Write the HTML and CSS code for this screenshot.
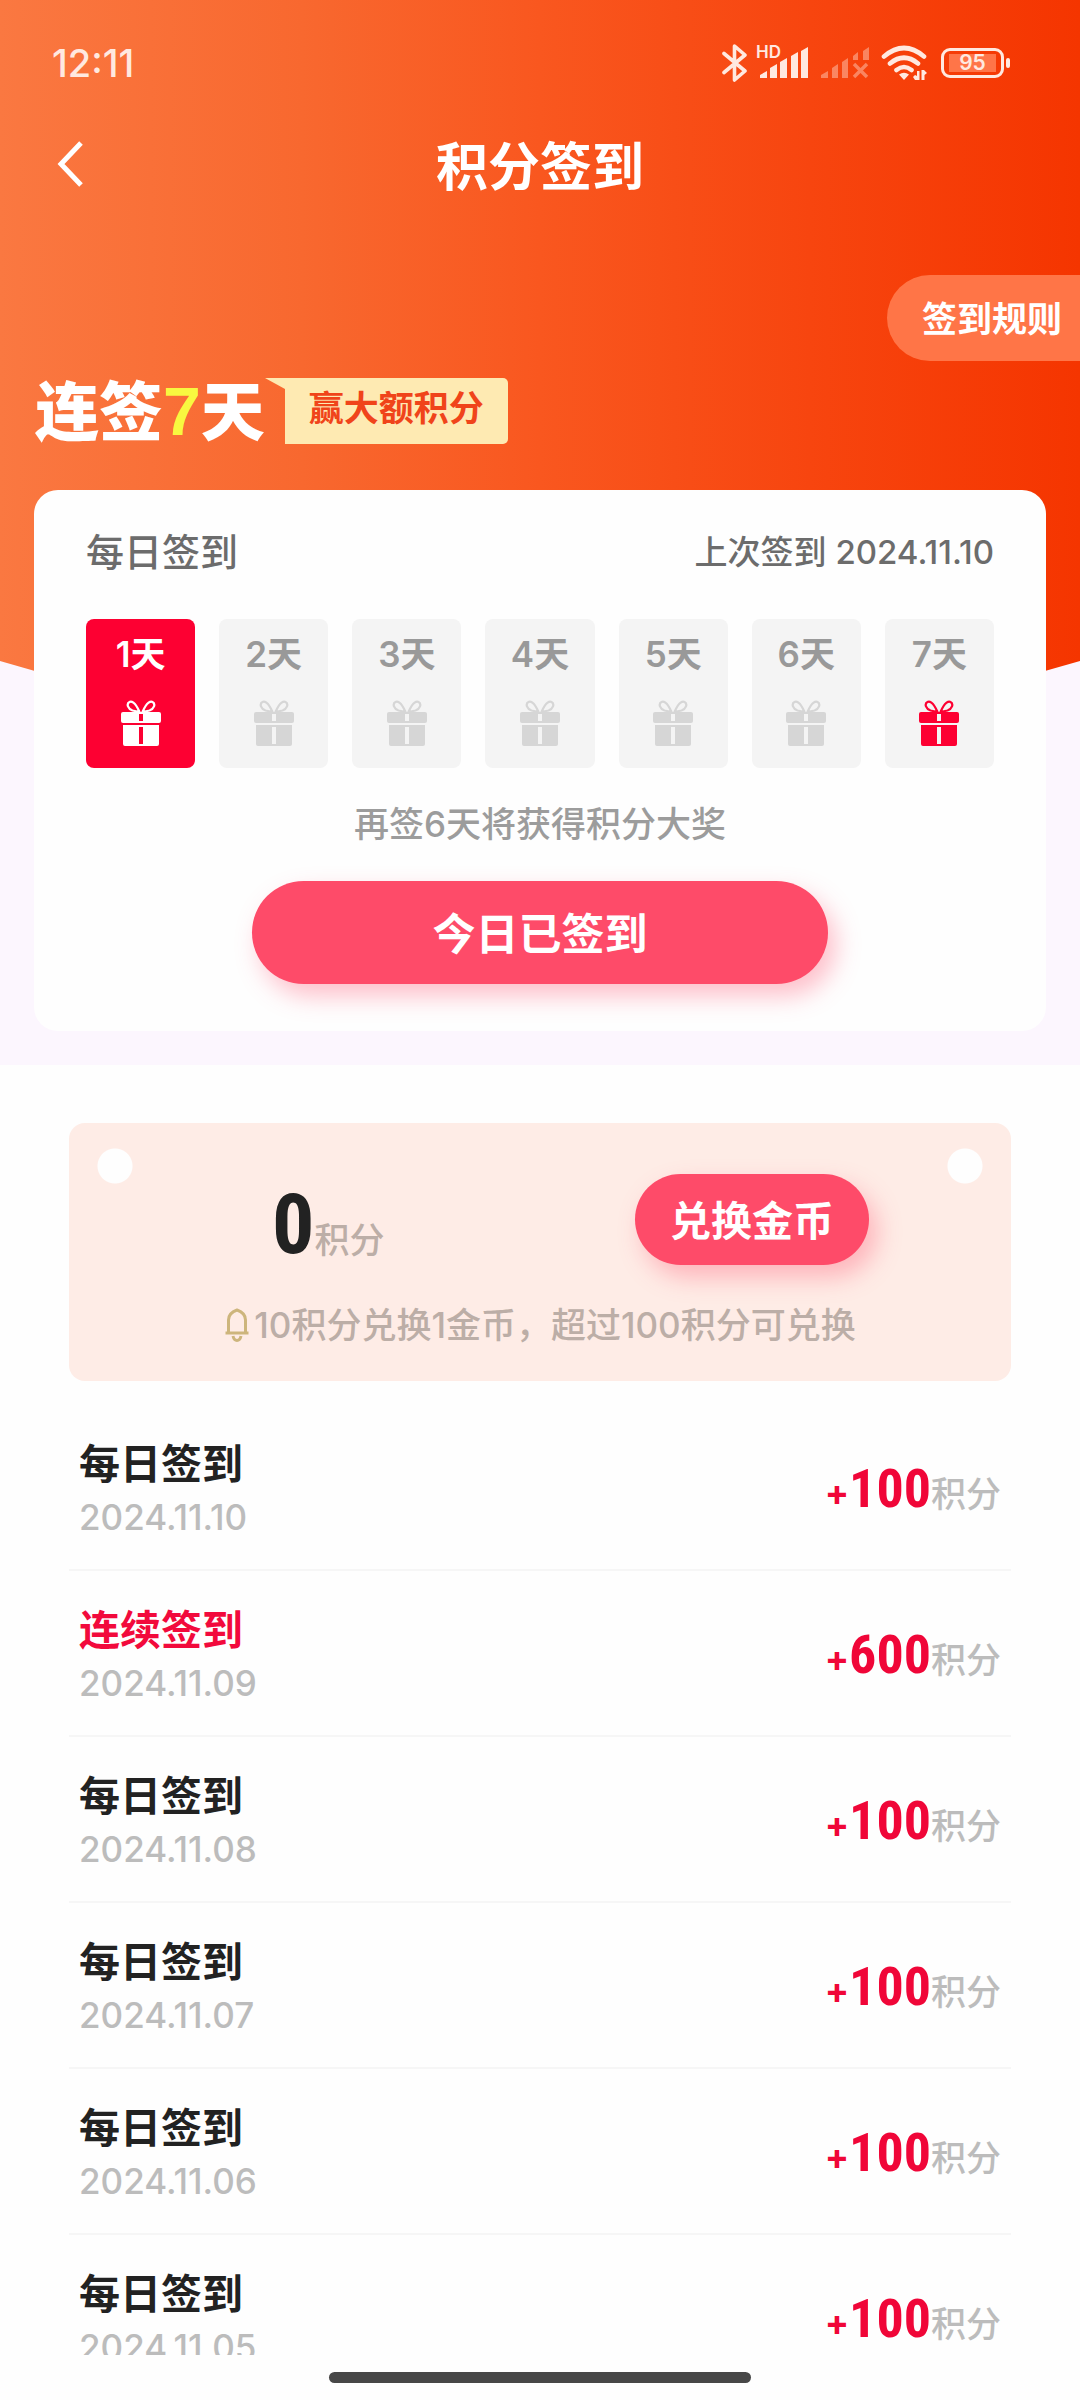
FILE: index.html
```html
<!DOCTYPE html>
<html lang="zh-CN">
<head>
<meta charset="utf-8">
<meta name="viewport" content="width=device-width, initial-scale=1">
<title>积分签到</title>
<link rel="stylesheet" href="styles.css">
</head>
<body>
<svg class="defs" aria-hidden="true">
  <symbol id="gift" viewBox="0 0 40 46">
    <path d="M18.500 12C14 1.500 10 1 8.500 2 5 4 7 9 11.500 10.500ZM21.500 12C26 1.500 30 1 31.500 2 35 4 33 9 28.500 10.500Z" fill="none" stroke="currentColor" stroke-width="2.200" stroke-linejoin="round"/>
    <path fill="currentColor" fill-rule="evenodd" d="M2 12H38Q40 12 40 14V21Q40 23 38 23H2Q0 23 0 21V14Q0 12 2 12ZM18 14V21H22V14ZM2 25H38V44Q38 46 36 46H4Q2 46 2 44ZM18 27V44H22V27Z"/>
  </symbol>
</svg>
<div class="app">
  <section class="hero">
    <div class="status">
      <time class="clock">12:11</time>
      <div class="indicators">
        <svg width="26" height="40" viewBox="0 0 26 40" aria-label="蓝牙"><path d="M2 10.500 23 28 12.500 37V3L23 12 2 29.500" fill="none" stroke="currentColor" stroke-width="3.600" stroke-linejoin="round" stroke-linecap="round"/></svg>
        <div class="cell">
          <span class="hd">HD</span>
          <svg width="50" height="32" viewBox="0 0 50 32" fill="currentColor" aria-label="信号"><path d="M1 31V28L8 24V31ZM11 31V21L18 17V31ZM21 31V15L28 11V31ZM32 31V9L39 5V31ZM42 31V4L49 0V31Z"/></svg>
        </div>
        <svg class="faded" width="50" height="32" viewBox="0 0 50 32" fill="currentColor" aria-label="无信号"><path d="M1 31V28L8 24V31ZM12 31V21L18 17V31ZM22 31V15L28 11V31ZM33 13V9L38 5V13ZM43 13V4L49 0V13Z"/><path d="M34 17 47 30M47 17 34 30" stroke="currentColor" stroke-width="3.500"/></svg>
        <svg class="wifi" width="48" height="36" viewBox="0 0 48 36" aria-label="无线网络"><path d="M3 11.500Q23 -5.500 43 11.500M9 18.500Q23 7 37 18.500M15.500 25Q23 19 30.500 25" fill="none" stroke="currentColor" stroke-width="4.600" stroke-linecap="round"/><path fill="currentColor" d="M18 29.500Q23 26 28 29.500L23 35ZM34 35 32 32 34 30 36 31V26H38.500V35ZM40.500 25H43L46 28 43.500 30V35H40.500Z"/></svg>
        <div class="battery"><span>95</span></div>
      </div>
    </div>

    <header class="nav">
      <button class="back" type="button" aria-label="返回"><svg width="28" height="46" viewBox="0 0 28 46"><path d="M25 2 5 23 25 44" fill="none" stroke="currentColor" stroke-width="5"/></svg></button>
      <h1>积分签到</h1>
    </header>

    <button class="rules" type="button">签到规则</button>

    <div class="headline">
      <h2>连签<em>7</em>天</h2>
      <span class="tag">赢大额积分</span>
    </div>

    <div class="card">
      <div class="card-head">
        <h3>每日签到</h3>
        <p>上次签到 2024.11.10</p>
      </div>
      <ol class="days">
        <li class="done"><span>1天</span><svg><use href="#gift"/></svg></li>
        <li><span>2天</span><svg><use href="#gift"/></svg></li>
        <li><span>3天</span><svg><use href="#gift"/></svg></li>
        <li><span>4天</span><svg><use href="#gift"/></svg></li>
        <li><span>5天</span><svg><use href="#gift"/></svg></li>
        <li><span>6天</span><svg><use href="#gift"/></svg></li>
        <li class="prize"><span>7天</span><svg><use href="#gift"/></svg></li>
      </ol>
      <p class="hint">再签6天将获得积分大奖</p>
      <button class="pill sign" type="button">今日已签到</button>
    </div>
  </section>

  <section class="points">
    <div class="balance">
      <p class="total"><strong>0</strong><span>积分</span></p>
      <button class="pill exchange" type="button">兑换金币</button>
    </div>
    <p class="tip"><svg width="26" height="36" viewBox="0 0 26 36"><path d="M4.500 26V13Q4.500 6 13 3 21.500 6 21.500 13V26ZM1.500 26H24.500M9 29Q10 33.500 13 33.500T17 29" fill="none" stroke="currentColor" stroke-width="3"/></svg>10积分兑换1金币，超过100积分可兑换</p>
  </section>

  <ul class="records">
    <li><div><h4>每日签到</h4><time>2024.11.10</time></div><p><b>+</b><strong>100</strong><span>积分</span></p></li>
    <li class="streak"><div><h4>连续签到</h4><time>2024.11.09</time></div><p><b>+</b><strong>600</strong><span>积分</span></p></li>
    <li><div><h4>每日签到</h4><time>2024.11.08</time></div><p><b>+</b><strong>100</strong><span>积分</span></p></li>
    <li><div><h4>每日签到</h4><time>2024.11.07</time></div><p><b>+</b><strong>100</strong><span>积分</span></p></li>
    <li><div><h4>每日签到</h4><time>2024.11.06</time></div><p><b>+</b><strong>100</strong><span>积分</span></p></li>
    <li><div><h4>每日签到</h4><time>2024.11.05</time></div><p><b>+</b><strong>100</strong><span>积分</span></p></li>
  </ul>

  <footer class="home"><i></i></footer>
</div>
</body>
</html>
```
FILE: styles.css
```css
* { box-sizing: border-box; margin: 0; padding: 0; }

body {
  font-family: Inter, "Noto Sans CJK SC", sans-serif;
  font-weight: 500;
  font-size: 35px;
  line-height: 48px;
  color: #222;
  background: #fefefe;
}

h1, h4 { font-weight: 600; }
h2, h3 { font-weight: 500; }
em, i { font-style: normal; }
ol, ul { list-style: none; }
button { border: 0; font: inherit; font-weight: 600; color: inherit; background: none; cursor: pointer; }
svg { display: block; flex: none; }
.defs { display: none; }

.app { display: flex; flex-direction: column; height: 100vh; overflow: hidden; }

/* Hero */
.hero {
  position: relative;
  flex: none;
  padding-bottom: 34px;
  background: #fcf6fe;
  color: #fff;
}
.hero::before {
  content: "";
  position: absolute;
  inset: 0 0 auto;
  height: 700px;
  background: linear-gradient(90deg, #fa7841 0%, #f8682f 28%, #f9571f 50%, #f7450f 75%, #f53500 100%);
  clip-path: polygon(0 0, 100% 0, 100% 661px, 90% 692px, 10% 692px, 0 661px);
}
.hero > * { position: relative; }

.status {
  display: flex;
  align-items: center;
  justify-content: space-between;
  height: 126px;
  padding: 0 69px 0 52px;
  color: #ffe9e0;
}
.clock { font-size: 38px; }
.indicators { display: flex; align-items: center; gap: 11px; }
.cell { position: relative; }
.hd { position: absolute; left: -3px; top: -2px; font-size: 17px; line-height: 14px; font-weight: 600; }
.faded { opacity: .4; }
.battery {
  position: relative;
  display: grid;
  place-items: center;
  width: 63px;
  height: 30px;
  margin: 0 7px 0 1px;
  border: 3px solid currentColor;
  border-radius: 9px;
  font-size: 21px;
  line-height: 18px;
  font-weight: 600;
}
.battery span { width: 47px; text-align: center; background: #ff7548; }
.battery::after {
  content: "";
  position: absolute;
  right: -9px;
  top: 7px;
  width: 4px;
  height: 10px;
  border-radius: 2px;
  background: currentColor;
}

.nav {
  display: grid;
  grid-template-columns: 100px 1fr 100px;
  align-items: center;
  height: 84px;
}
.nav h1 { font-size: 52px; line-height: 72px; text-align: center; }
.back { display: flex; padding: 0 0 8px 56px; }

.rules {
  display: block;
  height: 86px;
  margin: 65px 0 0 auto;
  padding: 2px 18px 0 35px;
  border-radius: 43px 0 0 43px;
  background: #ff7547;
}

.headline { display: flex; gap: 20px; height: 66px; margin: 17px 35px 0; }
.headline h2 { font-size: 64px; line-height: 66px; font-weight: 900; }
.headline em { font-family: "Liberation Sans", sans-serif; font-size: 68px; color: #f8f840; }
.tag {
  position: relative;
  padding: 0 24px;
  border-radius: 0 5px 5px 0;
  background: #feeab2;
  color: #f0441a;
  font-weight: 700;
  line-height: 60px;
}
.tag::before {
  content: "";
  position: absolute;
  right: 100%;
  top: 0;
  border-top: 11px solid #feeab2;
  border-left: 20px solid transparent;
}

.card {
  display: flex;
  flex-direction: column;
  margin: 46px 34px 0;
  padding: 38px 52px 47px;
  border-radius: 24px;
  background: #fefefe;
  color: #6c6c6c;
}
.card-head { display: flex; align-items: center; justify-content: space-between; }
.card-head h3 { font-size: 38px; }
.card-head p { font-size: 33px; }

.days {
  display: grid;
  grid-template-columns: repeat(7, 1fr);
  gap: 24px;
  margin-top: 43px;
  color: #999;
}
.days li {
  display: flex;
  flex-direction: column;
  align-items: center;
  height: 149px;
  padding-top: 11px;
  border-radius: 8px;
  background: #f4f4f4;
}
.days span { font-weight: 600; }
.days svg { width: 40px; height: 46px; margin-top: 22px; color: #d6d6d6; }
.days .done { background: #fd0032; color: #fff; }
.days .done svg { color: #fff; }
.days .prize svg { color: #fd0032; }

.hint { margin-top: 32px; text-align: center; color: #9c9c9c; }

.pill {
  color: #fff;
  background: #fe4b69;
  box-shadow: 8px 12px 24px rgba(254, 75, 105, .35);
}
.sign {
  align-self: center;
  width: 63.500%;
  height: 103px;
  margin-top: 33px;
  padding-top: 2px;
  border-radius: 52px;
  font-size: 43px;
}

/* Points */
.points {
  flex: none;
  margin: 58px 69px 0;
  padding: 51px 0 32px;
  border-radius: 16px;
  background:
    radial-gradient(circle at 46px 43px, #fefefe 17px, transparent 18px),
    radial-gradient(circle at calc(100% - 46px) 43px, #fefefe 17px, transparent 18px),
    #feece6;
}
.balance {
  display: flex;
  align-items: center;
  justify-content: space-between;
  padding: 0 142px 0 203px;
}
.total { display: flex; align-items: baseline; height: 91px; padding-top: 5px; line-height: 91px; color: #bcaea7; }
.total strong, .records strong {
  font-family: "Roboto Condensed", "Open Sans Condensed", "Noto Sans Condensed", "Liberation Sans", sans-serif;
  font-weight: 700;
}
.total strong { font-size: 84px; color: #222; }
.exchange { height: 91px; padding: 2px 35px 0; border-radius: 46px; font-size: 41px; }
.tip { display: flex; align-items: center; justify-content: center; gap: 4px; margin-top: 36px; color: #bcaea7; }
.tip svg { color: #cdb57c; }

/* Records */
.records { flex: 1; min-height: 0; margin: 24px 69px 0; overflow: hidden; }
.records li {
  display: flex;
  align-items: center;
  justify-content: space-between;
  height: 166px;
  padding: 2px 10px 0;
  border-bottom: 2px solid #f6f6f6;
}
.records h4 { font-size: 41px; line-height: 58px; }
.records time { display: block; color: #bcbcbc; }
.records .streak h4 { color: #f20a3c; }
.records p { display: flex; align-items: baseline; padding-top: 16px; color: #bcbcbc; }
.records b, .records strong { color: #f00638; }
.records b { align-self: center; font-size: 36px; line-height: 54px; padding-bottom: 8px; }
.records strong { font-size: 54px; }

.home { display: flex; flex: none; justify-content: center; height: 45px; padding-top: 17px; }
.home i { width: 39%; height: 11px; border-radius: 6px; background: #474747; }
```
